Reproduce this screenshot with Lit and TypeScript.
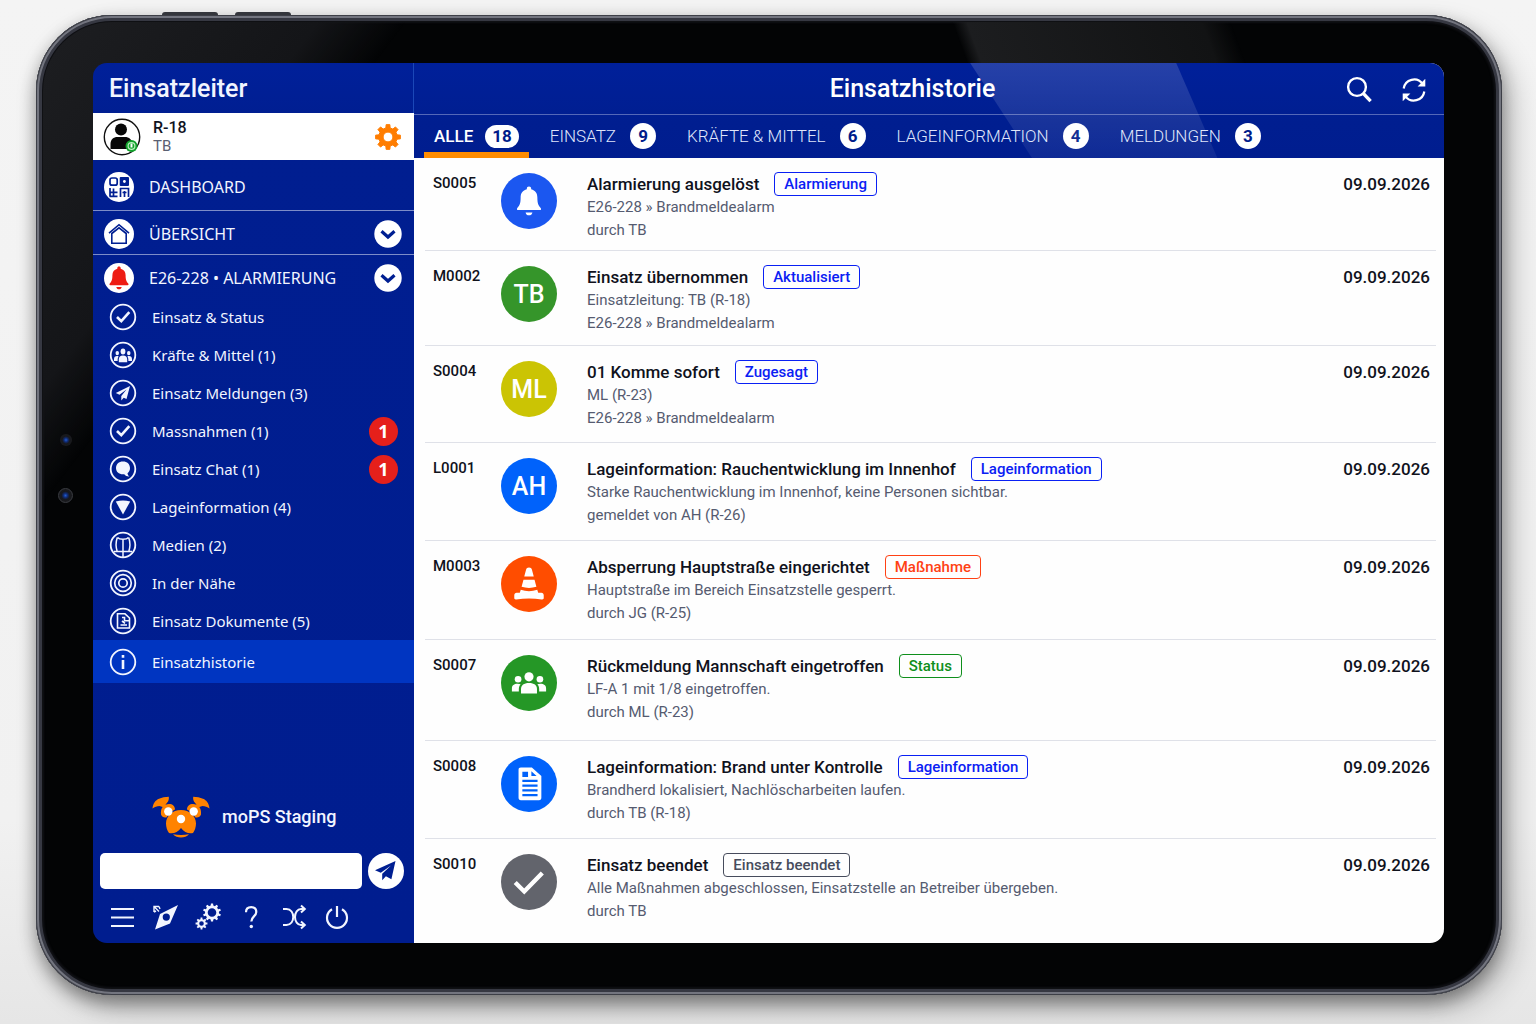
import { LitElement, html, svg, css, type TemplateResult, type SVGTemplateResult } from "lit";
import { customElement, state } from "lit/decorators.js";
import { classMap } from "lit/directives/class-map.js";

/** Outline of a cog wheel with a round hole, for fill-rule evenodd. */
function cog(cx: number, cy: number, outer: number, inner: number, hole: number, teeth: number): string {
  const step = (Math.PI * 2) / teeth;
  const points: string[] = [];
  for (let i = 0; i < teeth; i++) {
    const mid = i * step - Math.PI / 2;
    const corners: [number, number][] = [
      [inner, -0.3],
      [outer, -0.19],
      [outer, 0.19],
      [inner, 0.3],
    ];
    for (const [r, k] of corners) {
      const a = mid + k * step;
      points.push(`${(cx + r * Math.cos(a)).toFixed(2)} ${(cy + r * Math.sin(a)).toFixed(2)}`);
    }
  }
  return (
    `M${points.join("L")}Z` +
    `M${cx - hole} ${cy}a${hole} ${hole} 0 1 0 ${hole * 2} 0a${hole} ${hole} 0 1 0 ${-hole * 2} 0Z`
  );
}

function icon(viewBox: string, body: SVGTemplateResult): TemplateResult {
  return html`<svg viewBox=${viewBox} aria-hidden="true">${body}</svg>`;
}

const bellShape = svg`
  <path fill="currentColor" d="M15 3.5c-1.100 0-1.700.7-1.700 1.700v.6C10 6.600 8.400 9 8.400 12.300c0 4.800-1 6.500-2.600 8.200-.7.800-.3 1.700.6 1.700h17.200c.9 0 1.300-.9.6-1.700-1.600-1.700-2.600-3.400-2.600-8.200 0-3.300-1.600-5.700-4.900-6.500v-.6c0-1-.6-1.700-1.700-1.700z"/>
  <path fill="currentColor" d="M12.300 24h5.400c-.3 1.500-1.300 2.300-2.700 2.300s-2.400-.8-2.700-2.300z"/>`;

const peopleShape = svg`
  <g fill="currentColor">
    <circle cx="20" cy="10.500" r="4.800"/>
    <circle cx="8.500" cy="13" r="3.500"/>
    <circle cx="31.500" cy="13" r="3.500"/>
    <path d="M11.600 28v-4.500c0-4.300 2.900-6.500 8.400-6.500s8.400 2.200 8.400 6.500V28z"/>
    <path d="M2 26v-3.200c0-3.500 2.300-5 6-5 1.300 0 2.300.2 3.200.6-1.300 1.300-1.900 3-1.900 5.100V26z"/>
    <path d="M38 26v-3.200c0-3.500-2.300-5-6-5-1.300 0-2.300.2-3.200.6 1.300 1.300 1.900 3 1.900 5.100V26z"/>
  </g>`;

const ring = svg`<circle cx="14" cy="14" r="12.300" fill="none" stroke="currentColor" stroke-width="1.800"/>`;
const tick = svg`${ring}<path fill="none" stroke="currentColor" stroke-width="2.600" d="M8 14l4.300 4.200 8-9"/>`;

const icons = {
  profile: icon("0 0 38 38", svg`
    <circle cx="19" cy="19" r="17.700" fill="#fff" stroke="#111" stroke-width="1.400"/>
    <circle cx="18" cy="11.500" r="6" fill="#080808"/>
    <path d="M7.500 31v-5c0-4.500 3-7 7-7h7.500c4 0 7 2.500 7 7v5z" fill="#080808"/>
    <circle cx="28.500" cy="28" r="6" fill="#12a22c"/>
    <circle cx="28.500" cy="28" r="3.400" fill="none" stroke="#b9f0bd" stroke-width="1.200"/>
    <path d="M28.500 25.500v4" stroke="#fff" stroke-width="2"/>`),
  gear: icon("0 0 28 28", svg`<path fill="#ff7d00" fill-rule="evenodd" stroke="#ff7d00" stroke-linejoin="round" d=${cog(14, 14, 12.5, 9.3, 4.9, 8)} />`),
  dashboard: icon("0 0 30 30", svg`
    <circle cx="15" cy="15" r="15" fill="#fff"/>
    <g fill="none" stroke="#001f92" stroke-width="1.700">
      <rect x="6" y="6" width="7.200" height="7.200" rx="2"/>
      <path d="M5.500 20.300h8M9.500 16.500v8.500M6 16v8.500M5.500 24.300h8"/>
      <path d="M16 16.500h8.500V25M16.500 16v9M20.500 25v-6M18.500 20.500h4"/>
    </g>
    <rect x="15.700" y="5" width="9.300" height="9" rx="1" fill="#001f92"/>
    <circle cx="20.400" cy="9.500" r="1.400" fill="#fff"/>`),
  home: icon("0 0 30 30", svg`
    <circle cx="15" cy="15" r="15" fill="#fff"/>
    <path fill="none" stroke="#001f92" stroke-width="1.600" d="M5 14.200L15 5.700l10 8.500M7.800 14.500v9.700h14.400v-9.700L15 8.800z"/>`),
  alarm: icon("0 0 30 30", svg`<circle cx="15" cy="15" r="15" fill="#fff"/><g color="#ee1c14">${bellShape}</g>`),
  chevron: icon("0 0 28 28", svg`
    <circle cx="14" cy="14" r="13.700" fill="#fff"/>
    <path fill="none" stroke="#001f92" stroke-width="3.200" d="M7.500 11.300l6.500 5.700 6.500-5.700"/>`),
  tick: icon("0 0 28 28", tick),
  people: icon("0 0 28 28", svg`${ring}<g transform="translate(4 4) scale(.5 .62)">${peopleShape}</g>`),
  plane: icon("0 0 28 28", svg`${ring}<path fill="currentColor" d="M21 7L6.800 14l3.700 1.800 7-5.300-5.200 6.500v4.500l2.400-2.700 2.800 1.300z"/>`),
  chat: icon("0 0 28 28", svg`${ring}<path fill="currentColor" d="M14 6.500c4.200 0 7 2.700 7 6.500 0 2.500-1 4-2.500 5.200.2 1.500.9 2.500 2 3.300-2.200.2-4-.6-5.200-2.200H14c-4.200 0-7-2.500-7-6.300s2.800-6.500 7-6.500z"/>`),
  triangle: icon("0 0 28 28", svg`${ring}<path fill="currentColor" d="M6.800 8.500c4.700-1.500 9.700-1.500 14.400 0L14 21.500z"/>`),
  media: icon("0 0 28 28", svg`${ring}
    <path fill="none" stroke="currentColor" stroke-width="1.500" d="M8.500 6.500c1.500 1.800 4 1.800 5.500 1.800s4 0 5.500-1.800M14 8.300V26M8.300 6.500c-1.600 4.500-1.600 9.500 0 14.500M19.700 6.500c1.600 4.500 1.600 9.500 0 14.500M5 20.500h18"/>`),
  target: icon("0 0 28 28", svg`${ring}
    <g fill="none" stroke="currentColor" stroke-width="1.700"><circle cx="14" cy="14" r="8.300"/><circle cx="14" cy="14" r="4.200"/></g>`),
  document: icon("0 0 28 28", svg`${ring}
    <path fill="none" stroke="currentColor" stroke-width="1.600" d="M8.500 6.800h7.500l4.500 4.200v10h-12zM13 10.500h2.500v3.300h5M11.500 18h6.500M13 14l3 2.300"/>`),
  info: icon("0 0 28 28", svg`${ring}
    <path stroke="currentColor" stroke-width="2.600" d="M14 12v9M14 7v2.700"/>`),
  send: icon("0 0 36 36", svg`
    <circle cx="18" cy="18" r="18" fill="#fff"/>
    <path fill="#001f92" d="M27.500 8L7 17.300l5.800 2.500L23 12.500l-8.800 8.300v6.500l3.700-4 5.500 3z"/>`),
  menu: icon("0 0 28 28", svg`<path stroke="currentColor" stroke-width="2" d="M3 6h23M3 14.500h23M3 23h23"/>`),
  compass: icon("0 0 28 28", svg`
    <path fill="currentColor" fill-rule="evenodd" d="M27 2L19 20.500 4 26.500 9 11zM15.300 10.500a3.600 3.600 0 1 0 0 7.200a3.600 3.600 0 1 0 0-7.200z"/>
    <path fill="none" stroke="currentColor" stroke-width="1.400" d="M3 9V3.500h5M3.500 4l4.500 4.500M8 3.500L9 6M3 9l2-1"/>`),
  gears: icon("0 0 28 28", svg`
    <path fill="currentColor" fill-rule="evenodd" d=${cog(18, 9.5, 9, 7, 4.3, 10)} />
    <path fill="currentColor" fill-rule="evenodd" d=${cog(7.5, 20.5, 6, 4.4, 2.3, 8)} />`),
  help: icon("0 0 28 28", svg`
    <path fill="none" stroke="currentColor" stroke-width="2.200" d="M9 9.300C9 6.100 11 4.200 14.200 4.200c3.100 0 5.100 1.900 5.100 4.700 0 4.300-5 4.700-5 9.600"/>
    <circle cx="14.300" cy="23.500" r="1.700" fill="currentColor"/>`),
  shuffle: icon("0 0 28 28", svg`
    <g fill="none" stroke="currentColor" stroke-width="2">
      <path d="M3 6h3.500c9 0 9 16 0 16H3M25 6h-4c-3.500 0-6 3.500-6 8s2.500 8 6 8h4"/>
      <path d="M21 2.500L24.800 6 21 9.500M21 18.500l3.800 3.500-3.800 3.500"/>
    </g>`),
  power: icon("0 0 28 28", svg`<path fill="none" stroke="currentColor" stroke-width="2.200" d="M9 6.200a10 10 0 1 0 10 0M14 3v11"/>`),
  search: icon("0 0 28 28", svg`
    <circle cx="12" cy="12" r="8.900" fill="none" stroke="currentColor" stroke-width="2.400"/>
    <path stroke="currentColor" stroke-width="3.400" d="M18 18.200l7.600 8"/>`),
  refresh: icon("0 0 28 28", svg`
    <path fill="none" stroke="currentColor" stroke-width="2.200" d="M3.700 13.500A10.500 10.500 0 0 1 22.500 8.700M24.300 16.500A10.500 10.500 0 0 1 5.500 21.300"/>
    <path fill="currentColor" d="M25.300 3.800v7.700h-7.700zM2.700 26.200v-7.700h7.700z"/>`),
  dog: icon("0 0 58 42", svg`
    <g fill="#ff8300">
      <path d="M.5 12.500C1 7.500 3.500 4 7 2.700 10 1.500 13 1 16.800.8c.3 3-.3 4.500-2 6.200-1 1.500-1.800 2.800-3.300 4.300L7.500 10c-2.500.3-5 1.200-7 2.500z"/>
      <path d="M57.500 12.500C57 7.500 54.500 4 51 2.700 48 1.500 45 1 41.200.8c-.3 3 .3 4.500 2 6.200 1 1.500 1.800 2.800 3.300 4.300l4-1.300c2.500.3 5 1.200 7 2.500z"/>
      <path d="M9 18.500c-.8-6.500 3-10.500 8-10.500 3.500 0 6 2 6 5.500-3.800 1.800-6.500 4.300-8.200 7.700-2.500.6-5-.2-5.800-2.700z"/>
      <path d="M49 18.500c.8-6.500-3-10.500-8-10.500-3.500 0-6 2-6 5.500 3.800 1.800 6.500 4.300 8.200 7.700 2.500.6 5-.2 5.800-2.700z"/>
      <path d="M29 14c8.500 0 15 6 15 13.500 0 3.500-1.200 7-3 9.500-4 1-9-.5-12-5-3 4.500-8 6-12 5-1.800-2.500-3-6-3-9.500C14 20 20.500 14 29 14z"/>
      <path d="M21 38.200c5 1 11 1 16 0-2 2.200-5 3.200-8 3.200s-6-1-8-3.200z"/>
    </g>
    <g fill="#fff"><circle cx="16.300" cy="15.500" r="4.200"/><circle cx="41.700" cy="15.500" r="4.200"/><circle cx="29" cy="23" r="4.200"/></g>`),
};

const eventIcons: Record<string, TemplateResult> = {
  bell: icon("0 0 30 30", bellShape),
  people: icon("0 0 40 34", peopleShape),
  cone: icon("0 0 40 40", svg`
    <path fill="currentColor" d="M20 2.500c1.700 0 2.700.9 3.100 2.400l1.900 7.100H15l1.900-7.100c.4-1.500 1.400-2.400 3.100-2.400z"/>
    <path fill="currentColor" d="M14.200 15.500h11.600l2 7.500c-5 1.500-10.600 1.500-15.600 0z"/>
    <path fill="currentColor" d="M11.300 26c5.700 2 11.700 2 17.400 0l1 3.300H33c1.500 0 2.500 1 2.500 2.500v3c0 1.200-1 1.700-2 1.500-9-1.300-18-1.300-27 0-1 .2-2-.3-2-1.500v-3c0-1.500 1-2.500 2.500-2.500h3.300z"/>`),
  file: icon("0 0 40 40", svg`
    <path fill="currentColor" fill-rule="evenodd" d="M9.500 2.500h13.500L33 11.500V34.500c0 1.700-.8 2.500-2.500 2.500h-19c-1.700 0-2.500-.8-2.500-2.500V5c0-1.700.8-2.500 2.500-2.500zM13 7v5.500h6V7zM22.500 6.500v5h5.500zM13 15.500v2.300h16v-2.300zM13 20.500v2.300h16v-2.300zM13 25.500v2.300h16v-2.300zM13 30.500v2.300h16v-2.300z"/>`),
  check: icon("0 0 40 40", svg`<path fill="none" stroke="currentColor" stroke-width="4.600" d="M5.500 20.500l9.500 9.500L34 10.500"/>`),
};

interface HistoryEvent {
  code: string;
  tone: string;
  initials?: string;
  symbol?: string;
  title: string;
  tag: string;
  tagTone: string;
  lines: [string, string];
  date: string;
}

const date = "09.09.2026";
const events: HistoryEvent[] = [
  { code: "S0005", tone: "royal", symbol: "bell", title: "Alarmierung ausgelöst", tag: "Alarmierung", tagTone: "tag-blue", lines: ["E26-228 » Brandmeldealarm", "durch TB"], date },
  { code: "M0002", tone: "leaf", initials: "TB", title: "Einsatz übernommen", tag: "Aktualisiert", tagTone: "tag-blue", lines: ["Einsatzleitung: TB (R-18)", "E26-228 » Brandmeldealarm"], date },
  { code: "S0004", tone: "olive", initials: "ML", title: "01 Komme sofort", tag: "Zugesagt", tagTone: "tag-blue", lines: ["ML (R-23)", "E26-228 » Brandmeldealarm"], date },
  { code: "L0001", tone: "azure", initials: "AH", title: "Lageinformation: Rauchentwicklung im Innenhof", tag: "Lageinformation", tagTone: "tag-blue", lines: ["Starke Rauchentwicklung im Innenhof, keine Personen sichtbar.", "gemeldet von AH (R-26)"], date },
  { code: "M0003", tone: "orange", symbol: "cone", title: "Absperrung Hauptstraße eingerichtet", tag: "Maßnahme", tagTone: "tag-orange", lines: ["Hauptstraße im Bereich Einsatzstelle gesperrt.", "durch JG (R-25)"], date },
  { code: "S0007", tone: "green", symbol: "people", title: "Rückmeldung Mannschaft eingetroffen", tag: "Status", tagTone: "tag-green", lines: ["LF-A 1 mit 1/8 eingetroffen.", "durch ML (R-23)"], date },
  { code: "S0008", tone: "azure", symbol: "file", title: "Lageinformation: Brand unter Kontrolle", tag: "Lageinformation", tagTone: "tag-blue", lines: ["Brandherd lokalisiert, Nachlöscharbeiten laufen.", "durch TB (R-18)"], date },
  { code: "S0010", tone: "grey", symbol: "check", title: "Einsatz beendet", tag: "Einsatz beendet", tagTone: "tag-grey", lines: ["Alle Maßnahmen abgeschlossen, Einsatzstelle an Betreiber übergeben.", "durch TB"], date },
];

const tabs = [
  { label: "ALLE", count: 18 },
  { label: "EINSATZ", count: 9 },
  { label: "KRÄFTE & MITTEL", count: 6 },
  { label: "LAGEINFORMATION", count: 4 },
  { label: "MELDUNGEN", count: 3 },
];

const missionLinks: { label: string; icon: TemplateResult; badge?: number }[] = [
  { label: "Einsatz & Status", icon: icons.tick },
  { label: "Kräfte & Mittel (1)", icon: icons.people },
  { label: "Einsatz Meldungen (3)", icon: icons.plane },
  { label: "Massnahmen (1)", icon: icons.tick, badge: 1 },
  { label: "Einsatz Chat (1)", icon: icons.chat, badge: 1 },
  { label: "Lageinformation (4)", icon: icons.triangle },
  { label: "Medien (2)", icon: icons.media },
  { label: "In der Nähe", icon: icons.target },
  { label: "Einsatz Dokumente (5)", icon: icons.document },
];

const tools = [
  { label: "Menü", icon: icons.menu },
  { label: "Kompass", icon: icons.compass },
  { label: "Einstellungen", icon: icons.gears },
  { label: "Hilfe", icon: icons.help },
  { label: "Wechseln", icon: icons.shuffle },
  { label: "Abmelden", icon: icons.power },
];

const reset = css`
  :host, * { box-sizing: border-box; }
  svg { display: block; width: 100%; height: 100%; }
  button { border: 0; padding: 0; background: none; color: inherit; font: inherit; cursor: pointer; }
  a { color: inherit; text-decoration: none; }
  ul, ol, h1, h2, h3, p { margin: 0; padding: 0; list-style: none; font-weight: inherit; font-size: inherit; }
`;

@customElement("side-bar")
export class SideBar extends LitElement {
  static styles = [reset, css`
    :host {
      display: flex;
      flex-direction: column;
      width: 321px;
      flex: none;
      background: linear-gradient(180deg, #00209a 0, #001e90 60px, #001d8f 100%);
      color: #f2f5ff;
      font-family: "Noto Sans", Roboto, sans-serif;
      font-size: 15px;
    }
    .title {
      height: 50px;
      padding-left: 16px;
      font: 500 25px/52px Roboto, sans-serif;
      border-right: 1px solid #1b48b8;
    }
    .profile {
      display: flex;
      align-items: center;
      gap: 12px;
      height: 47px;
      padding: 0 12px 0 10px;
      background: #fff;
      color: #10131f;
    }
    .avatar { width: 38px; height: 38px; }
    .who { flex: 1; font: 500 16px/18px Roboto, sans-serif; }
    .role { font-weight: 400; font-size: 15px; color: #5a6072; }
    .gear { width: 28px; height: 28px; }
    .section {
      display: flex;
      align-items: center;
      gap: 15px;
      height: 44px;
      padding: 2px 12px 0 11px;
      font-size: 16px;
    }
    .section.first { height: 51px; padding-top: 4px; }
    .section.lined { border-bottom: 1px solid #7d8cc8; }
    .section-icon { width: 30px; height: 30px; }
    .section-name { flex: 1; }
    .chevron { width: 28px; height: 28px; }
    .item {
      display: flex;
      align-items: center;
      gap: 15px;
      height: 38px;
      padding: 0 16px;
    }
    .missions { margin-top: -1px; }
    .item.active {
      height: 43px;
      background: #0035c1;
    }
    .item-icon { width: 28px; height: 28px; }
    .item-name { flex: 1; }
    .badge {
      width: 29px;
      height: 29px;
      border-radius: 50%;
      background: #e5201b;
      color: #fff;
      font: 700 18px/29px "Noto Sans", sans-serif;
      text-align: center;
    }
    .brand {
      display: flex;
      align-items: center;
      gap: 12px;
      margin-top: auto;
      padding: 0 16px 15px 59px;
      font: 500 18px/42px Roboto, sans-serif;
    }
    .dog { width: 58px; height: 42px; }
    .message { display: flex; align-items: center; gap: 6px; padding: 0 10px 0 7px; }
    .field {
      flex: 1;
      min-width: 0;
      height: 36px;
      border: 0;
      border-radius: 5px;
      padding: 0 12px;
      background: #fff;
      font: 16px Roboto, sans-serif;
    }
    .send { width: 36px; height: 36px; }
    .tools { display: flex; gap: 15px; padding: 14px 16px 12px 15px; }
    .tool { width: 28px; height: 28px; }
  `];

  render() {
    return html`
      <h2 class="title">Einsatzleiter</h2>
      <div class="profile">
        <span class="avatar">${icons.profile}</span>
        <div class="who"><div>R-18</div><div class="role">TB</div></div>
        <button class="gear" aria-label="Profil einstellen">${icons.gear}</button>
      </div>
      <nav aria-label="Navigation">
        <a class="section first lined" href="#dashboard">
          <span class="section-icon">${icons.dashboard}</span><span class="section-name">DASHBOARD</span>
        </a>
        <a class="section lined" href="#uebersicht">
          <span class="section-icon">${icons.home}</span><span class="section-name">ÜBERSICHT</span>
          <span class="chevron">${icons.chevron}</span>
        </a>
        <a class="section" href="#alarmierung">
          <span class="section-icon">${icons.alarm}</span><span class="section-name">E26-228 • ALARMIERUNG</span>
          <span class="chevron">${icons.chevron}</span>
        </a>
        <ul class="missions">
          ${missionLinks.map((link) => html`
            <li><a class="item" href="#einsatz">
              <span class="item-icon">${link.icon}</span>
              <span class="item-name">${link.label}</span>
              ${link.badge ? html`<span class="badge">${link.badge}</span>` : ""}
            </a></li>`)}
          <li><a class="item active" href="#historie" aria-current="page">
            <span class="item-icon">${icons.info}</span><span class="item-name">Einsatzhistorie</span>
          </a></li>
        </ul>
      </nav>
      <div class="brand"><span class="dog">${icons.dog}</span><span>moPS Staging</span></div>
      <form class="message" @submit=${(e: Event) => e.preventDefault()}>
        <input class="field" type="text" aria-label="Nachricht" />
        <button class="send" aria-label="Senden">${icons.send}</button>
      </form>
      <div class="tools">
        ${tools.map((tool) => html`<button class="tool" aria-label=${tool.label}>${tool.icon}</button>`)}
      </div>
    `;
  }
}

@customElement("history-view")
export class HistoryView extends LitElement {
  static styles = [reset, css`
    :host {
      display: flex;
      flex-direction: column;
      flex: 1;
      min-width: 0;
      background: #fefefe;
      font-family: Roboto, sans-serif;
    }
    .top {
      position: relative;
      background: linear-gradient(180deg, #00209a 0, #001e90 60px, #001d8f 100%);
      color: #fff;
    }
    .gloss {
      position: absolute;
      inset: 0;
      background: linear-gradient(180deg, rgba(255, 255, 255, 0.15), rgba(255, 255, 255, 0.06));
      clip-path: polygon(54% 0, 74% 0, 78% 100%, 60% 100%);
      pointer-events: none;
    }
    .bar {
      display: flex;
      align-items: center;
      gap: 14px;
      height: 52px;
      padding: 0 16px 0 80px;
      border-bottom: 1px solid #5468b8;
    }
    .heading { flex: 1; text-align: center; font-size: 25px; font-weight: 500; }
    .actions { display: flex; gap: 27px; }
    .action { width: 28px; height: 28px; }
    .tabs { display: flex; gap: 11px; height: 43px; padding-left: 10px; }
    .tab {
      display: flex;
      align-items: center;
      gap: 14px;
      padding: 5px 10px 6px;
      font-size: 17px;
      font-weight: 300;
      line-height: 26px;
      color: #dfe4fa;
    }
    .tab.active {
      gap: 12px;
      font-weight: 500;
      color: #fff;
      padding-bottom: 0;
      border-bottom: 6px solid #ff8c00;
    }
    .count {
      min-width: 26px;
      height: 26px;
      border-radius: 13px;
      background: #fff;
      color: #001c8a;
      font: 700 17px/26px Roboto, sans-serif;
      text-align: center;
    }
    .tab.active .count { height: 23px; padding: 0 7px; line-height: 23px; }
    .events {
      flex: 1;
      display: grid;
      grid-template-rows: 93fr 95fr 97fr 98fr 99fr 101fr 98fr 104fr;
      padding: 0 8px 0 11px;
    }
    .event {
      display: flex;
      padding: 13px 6px 8px 8px;
      border-bottom: 1px solid #dfe1e8;
      color: #10121c;
    }
    .event:last-child { border-bottom: 0; }
    .code { width: 68px; font-size: 15px; font-weight: 500; line-height: 24px; }
    .disc {
      display: grid;
      place-items: center;
      width: 56px;
      height: 56px;
      margin: 2px 30px 0 0;
      border-radius: 50%;
      color: #fff;
      font-size: 25px;
      font-weight: 500;
    }
    .symbol { width: 38px; height: 38px; }
    .royal { background: #1b57f0; }
    .leaf { background: #35952a; }
    .olive { background: #cbc404; }
    .azure { background: #0062fb; }
    .orange { background: #ff4d00; }
    .green { background: #259726; }
    .grey { background: #62646c; }
    .text { flex: 1; min-width: 0; }
    .headline { display: flex; align-items: center; gap: 15px; height: 25px; }
    .name { font-size: 17px; font-weight: 500; }
    .tag {
      height: 24px;
      padding: 0 9px;
      border: 1px solid currentColor;
      border-radius: 4px;
      font-size: 15px;
      font-weight: 500;
      line-height: 22px;
    }
    .tag-blue { color: #0a20f4; }
    .tag-orange { color: #ff4114; }
    .tag-green { color: #0f8f1c; }
    .tag-grey { color: #474c5c; }
    .line { font-size: 15px; line-height: 23px; color: #555b70; }
    .date { font-size: 17px; font-weight: 500; line-height: 26px; }
  `];

  @state() private activeTab = 0;

  render() {
    return html`
      <header class="top">
        <div class="bar">
          <h1 class="heading">Einsatzhistorie</h1>
          <div class="actions">
            <button class="action" aria-label="Suchen">${icons.search}</button>
            <button class="action" aria-label="Aktualisieren">${icons.refresh}</button>
          </div>
        </div>
        <div class="tabs" role="tablist">
          ${tabs.map((tab, i) => html`
            <button role="tab" aria-selected=${i === this.activeTab ? "true" : "false"}
              class=${classMap({ tab: true, active: i === this.activeTab })}
              @click=${() => (this.activeTab = i)}>
              <span>${tab.label}</span><span class="count">${tab.count}</span>
            </button>`)}
        </div>
        <div class="gloss"></div>
      </header>
      <ol class="events">
        ${events.map((event) => html`
          <li class="event">
            <span class="code">${event.code}</span>
            <span class=${classMap({ disc: true, [event.tone]: true })}>
              ${event.symbol ? html`<span class="symbol">${eventIcons[event.symbol]}</span>` : event.initials}
            </span>
            <div class="text">
              <div class="headline">
                <h3 class="name">${event.title}</h3>
                <span class=${classMap({ tag: true, [event.tagTone]: true })}>${event.tag}</span>
              </div>
              ${event.lines.map((line) => html`<p class="line">${line}</p>`)}
            </div>
            <time class="date">${event.date}</time>
          </li>`)}
      </ol>
    `;
  }
}

@customElement("app-root")
export class AppRoot extends LitElement {
  static styles = [reset, css`
    :host {
      display: flex;
      min-height: 100vh;
      padding: 15px 34px 29px 36px;
      overflow: hidden;
      background: linear-gradient(180deg, #f4f4f4 0, #f1f1f1 80%, #e6e6e6 100%);
    }
    .device {
      position: relative;
      display: flex;
      flex: 1;
      min-width: 0;
      padding: 48px 58px 52px 57px;
      border-radius: 76px;
      background: #030405;
      box-shadow:
        inset 0 0 0 1px #3d3f47,
        inset 0 0 0 3px #73757f,
        inset 0 0 0 6px #363842,
        inset 0 0 2px 8px #101115,
        0 8px 18px rgba(0, 0, 0, 0.4),
        12px 14px 30px rgba(0, 0, 0, 0.2);
    }
    .sheen {
      position: absolute;
      inset: 7px;
      border-radius: 69px;
      background:
        linear-gradient(127deg, #1d1e21 0, #141518 220px, rgba(0, 0, 0, 0) 290px),
        linear-gradient(70deg, rgba(0, 0, 0, 0) 63%, #1c1d1f 64%, #121314 80%, rgba(0, 0, 0, 0) 82%) top / 100% 41px no-repeat;
    }
    .key {
      position: absolute;
      top: -3px;
      left: 126px;
      width: 56px;
      height: 3px;
      border-radius: 3px 3px 0 0;
      background: #34363c;
    }
    .key.second { left: 199px; }
    .lens {
      position: absolute;
      top: 419px;
      left: 24px;
      width: 12px;
      height: 12px;
      border-radius: 50%;
      background: radial-gradient(circle, #1f5ad0 0, #10286a 25%, #17181c 45%, #1c1d21 100%);
    }
    .lens.large {
      top: 473px;
      left: 22px;
      width: 15px;
      height: 15px;
      border: 1px solid #3a3c42;
    }
    .screen {
      position: relative;
      display: flex;
      flex: 1;
      min-width: 0;
      border-radius: 14px;
      overflow: hidden;
    }
  `];

  render() {
    return html`
      <div class="device">
        <div class="key"></div>
        <div class="key second"></div>
        <div class="sheen"></div>
        <div class="lens"></div>
        <div class="lens large"></div>
        <div class="screen">
          <side-bar></side-bar>
          <history-view></history-view>
        </div>
      </div>
    `;
  }
}
